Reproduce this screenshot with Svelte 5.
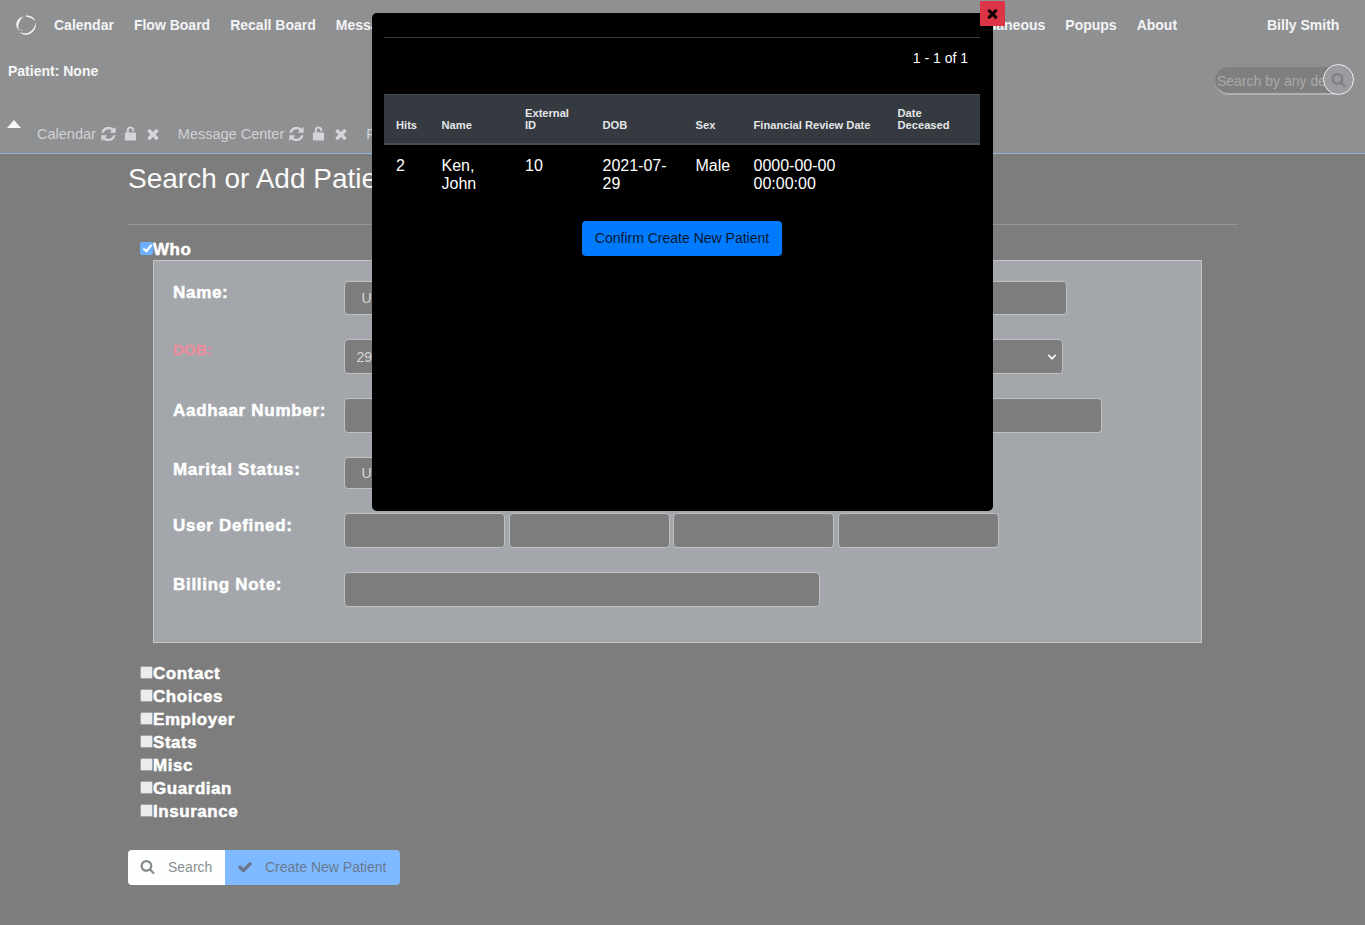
<script>
  const nav = ['Flow Board','Recall Board','Messages','Patient/Client','Fees','Modules','Procedures','Administration','Reports','Miscellaneous','Popups','About'];
  const refresh = 'M1639 1056q0 5-1 7-64 268-268 434.5t-478 166.5q-146 0-282.5-55t-243.5-157l-129 129q-19 19-45 19t-45-19-19-45v-448q0-26 19-45t45-19h448q26 0 45 19t19 45-19 45l-137 137q71 66 161 102t187 36q134 0 250-65t186-179q11-17 53-117 8-23 30-23h192q13 0 22.5 9.5t9.5 22.5zm25-800v448q0 26-19 45t-45 19h-448q-26 0-45-19t-19-45 19-45l138-138q-148-137-349-137-134 0-250 65t-186 179q-11 17-53 117-8 23-30 23h-199q-13 0-22.5-9.5t-9.5-22.5v-7q65-268 270-434.5t480-166.5q146 0 284 55.5t245 156.5l130-129q19-19 45-19t45 19 19 45z';
  const times = 'M1490 1322q0 40-28 68l-136 136q-28 28-68 28t-68-28l-294-294-294 294q-28 28-68 28t-68-28l-136-136q-28-28-28-68t28-68l294-294-294-294q-28-28-28-68t28-68l136-136q28-28 68-28t68 28l294 294 294-294q28-28 68-28t68 28l136 136q28 28 28 68t-28 68l-294 294 294 294q28 28 28 68z';
  const search = 'M1216 832q0-185-131.5-316.5t-316.5-131.5-316.5 131.5-131.5 316.5 131.5 316.5 316.5 131.5 316.5-131.5 131.5-316.5zm512 832q0 52-38 90t-90 38q-54 0-90-38l-343-342q-179 124-399 124-143 0-273.5-55.5t-225-150-150-225-55.5-273.5 55.5-273.5 150-225 225-150 273.5-55.5 273.5 55.5 225 150 150 225 55.5 273.5q0 220-124 399l343 343q37 37 37 90z';
  const check = 'M1671 566q0 40-28 68l-724 724-136 136q-28 28-68 28t-68-28l-136-136-362-362q-28-28-28-68t28-68l136-136q28-28 68-28t68 28l294 295 656-657q28-28 68-28t68 28l136 136q28 28 28 68z';
  const sections = ['Contact','Choices','Employer','Stats','Misc','Guardian','Insurance'];
  const tabs = ['Calendar','Message Center'];
</script>

<div class="page">
  <header class="header">
    <nav class="nav">
      <svg class="logo" viewBox="0 0 22 22" width="22" height="22" fill="#f6f6f6">
        <path d="M8.500 2.500C4.200 3.400 1.200 6.800 1.300 10.800c.1 2.400 1.100 4.500 2.800 5.900C3 14.900 3 12.400 3.700 10c.8-3 2.500-5.600 4.800-7.500z"/>
        <path d="M11 1.600c4.500-.2 8.300 2 9.200 5.700-1.600-2.300-5-4.300-9.200-4.800-.5-.1-.5-.9 0-.9z"/>
        <path d="M20.700 8.500c.9 5-1.800 10-6.800 11.700-3.500 1.200-7 .4-9.200-2.100 2.800 1.500 6.300 1.700 9.300.3 3.700-1.700 6-5.500 6.700-9.900z"/>
        <path d="M3.600 13.800c.4 1.300 2.500 3 4.800 3.300-1.900.1-3.900-.7-4.800-3.300z"/>
      </svg>
      <span class="item first">Calendar</span>
      {#each nav as n}<span class="item">{n}</span>{/each}
      <span class="user">Billy Smith</span>
    </nav>
    <div class="patient-row">
      <strong class="patient">Patient: None</strong>
      <div class="global-search">
        <span class="placeholder">Search by any de</span>
        <span class="circle"><svg viewBox="0 0 1792 1792" width="15" height="15"><path d={search} fill="#7f7f7f"/></svg></span>
      </div>
    </div>
    <div class="tabs">
      <span class="caret"></span>
      {#each tabs as t}
        <span class="tab">
          <span class="tab-label">{t}</span>
          <svg class="i-refresh" viewBox="100 200 1600 1400" width="15" height="14"><path d={refresh}/></svg>
          <svg class="i-lock" viewBox="0 0 14 16" width="13" height="15"><path d="M3 7V4.300C3 2 4.800.5 7 .5s4 1.500 4 3.800v.7c0 .4-.3.6-.7.6h-.8c-.4 0-.6-.2-.6-.6v-.7C8.900 3.200 8.100 2.500 7 2.500s-1.900.7-1.900 1.800V7h6.800c.6 0 1.100.5 1.100 1.100v6.300c0 .6-.5 1.100-1.100 1.100H2.100c-.6 0-1.100-.5-1.100-1.100V8.100C1 7.500 1.500 7 2.100 7z"/></svg>
          <svg class="i-times" viewBox="250 250 1300 1300" width="12" height="12"><path d={times}/></svg>
        </span>
      {/each}
      <span class="tab-label">Fees</span>
    </div>
  </header>

  <main class="main">
    <h1>Search or Add Patient</h1>
    <hr />
    <label class="section who"><input type="checkbox" checked />Who</label>
    <div class="panel">
      <div class="row">
        <span class="lbl name">Name:</span>
        <div class="field first-field w-name"><span>Unassigned</span></div>
      </div>
      <div class="row">
        <span class="lbl dob">DOB:</span>
        <div class="field dobf w-dob"><span class="small">29</span><svg viewBox="0 0 12 12" width="10" height="10" class="chev"><path d="M1.500 3.500 6 8l4.500-4.500" fill="none" stroke="#f2f2f2" stroke-width="2.200"/></svg></div>
      </div>
      <div class="row">
        <span class="lbl">Aadhaar Number:</span>
        <div class="field tall w-aad"></div>
      </div>
      <div class="row">
        <span class="lbl">Marital Status:</span>
        <div class="field short w-mar"><span>Unassigned</span></div>
      </div>
      <div class="row four">
        <span class="lbl">User Defined:</span>
        <div class="field ud"></div><div class="field ud"></div><div class="field ud"></div><div class="field ud"></div>
      </div>
      <div class="row">
        <span class="lbl">Billing Note:</span>
        <div class="field tall w-bill"></div>
      </div>
    </div>

    <div class="sections">
      {#each sections as s}
        <label class="section"><input type="checkbox" />{s}</label>
      {/each}
    </div>

    <div class="actions">
      <button class="btn search"><svg viewBox="0 0 1792 1792" width="15" height="15"><path d={search} fill="#85888b"/></svg><span>Search</span></button>
      <button class="btn create"><svg viewBox="0 0 1792 1792" width="16" height="16"><path d={check} fill="#6a7a8e"/></svg><span>Create New Patient</span></button>
    </div>
  </main>

  <div class="modal">
    <button class="close" aria-label="Close"><svg viewBox="0 0 1792 1792" width="15" height="15"><path d={times} fill="#140508"/></svg></button>
    <div class="rule"></div>
    <div class="count">1 - 1 of 1</div>
    <table>
      <colgroup>
        <col style="width:45.5px"/><col style="width:83.5px"/><col style="width:77.5px"/><col style="width:93px"/><col style="width:58px"/><col style="width:144px"/><col style="width:94.5px"/>
      </colgroup>
      <thead>
        <tr><th>Hits</th><th>Name</th><th>External<br/>ID</th><th>DOB</th><th>Sex</th><th>Financial Review Date</th><th>Date<br/>Deceased</th></tr>
      </thead>
      <tbody>
        <tr><td>2</td><td>Ken,<br/>John</td><td>10</td><td>2021-07-<br/>29</td><td>Male</td><td>0000-00-00<br/>00:00:00</td><td></td></tr>
      </tbody>
    </table>
    <div class="confirm-wrap"><button class="confirm">Confirm Create New Patient</button></div>
  </div>
</div>

<style>
  :global(body) { margin: 0; background: #7d7d7d; }
  .page { position: relative; width: 1365px; height: 925px; overflow: hidden; background: #7d7d7d; font-family: "Liberation Sans", Arial, sans-serif; color: #fff; }
  .header { height: 153px; background: #8f9092; border-bottom: 1px solid #8db6de; display: flex; flex-direction: column; }
  .nav { height: 50px; display: flex; align-items: center; padding-left: 15px; font-size: 14px; font-weight: 700; color: #f3f4f6; }
  .logo { flex: none; }
  .item { margin-left: 20px; white-space: nowrap; }
  .item.first { margin-left: 17px; }
  .user { position: absolute; left: 1267px; top: 17px; line-height: 16px; }
  .patient-row { position: relative; height: 54px; }
  .patient { position: absolute; left: 8px; top: 13px; font-size: 14px; line-height: 16px; color: #f6f6f6; }
  .global-search { position: absolute; left: 1215px; top: 17px; width: 130px; height: 28px; box-sizing: border-box; background: #7f7f7f; border-radius: 14px; border-bottom: 2px solid #b0b0b0; }
  .placeholder { position: absolute; left: 2px; top: 6px; font-size: 14px; line-height: 17px; color: #a9a9a9; white-space: nowrap; }
  .circle { position: absolute; left: 108px; top: -3px; width: 29px; height: 29px; border: 1.500px solid #eceded; border-radius: 50%; background: #9a9c9f; display: flex; align-items: center; justify-content: center; }
  .tabs { position: relative; flex: 1; display: flex; align-items: center; padding-left: 37px; padding-top: 10px; font-size: 14.500px; color: #cfd1d4; }
  .caret { position: absolute; left: 7px; top: 16px; width: 0; height: 0; border-left: 7.500px solid transparent; border-right: 7.500px solid transparent; border-bottom: 8px solid #f7f7f7; }
  .tab { display: flex; align-items: center; margin-right: 19px; }
  .tab-label { white-space: nowrap; }
  .tab svg { fill: #d3d5d8; flex: none; }
  .i-refresh { margin-left: 5px; }
  .i-lock { margin-left: 8px; }
  .i-times { margin-left: 10px; }

  .main { padding: 0 127px 0 128px; }
  h1 { margin: 8px 0 0; font-size: 28px; font-weight: 400; line-height: 34px; color: #fafafa; white-space: nowrap; }
  hr { margin: 28px 0 0; border: 0; border-top: 1px solid #959595; }
  .section { display: flex; align-items: center; margin-left: 12px; height: 23px; font-size: 17px; font-weight: 700; letter-spacing: .55px; color: #fff; -webkit-text-stroke: .5px #fff; line-height: 23px; }
  .section.who { margin-top: 13px; height: 22px; }
  .section input { margin: 0; width: 13px; height: 13px; flex: none; position: relative; top: -1px; appearance: none; background: #ececec; border: 1px solid #a3a3a3; border-radius: 2px; box-sizing: border-box; }
  .section input:checked { background: #6db0ff; border-color: #6db0ff; }
  .section input:checked::after { content: ""; position: absolute; left: 3.500px; top: .5px; width: 3px; height: 7px; border: solid #fff; border-width: 0 2px 2px 0; transform: rotate(40deg); }
  .panel { margin: 0 36px 0 25px; height: 383px; box-sizing: border-box; padding: 20px 19px 0; background: #a3a6aa; border: 1px solid #c3c6c9; display: flex; flex-direction: column; gap: 24px; }
  .row { display: flex; align-items: flex-start; gap: 4px; }
  .lbl { flex: none; width: 166.500px; margin-top: 2px; font-size: 17px; font-weight: 700; letter-spacing: .7px; -webkit-text-stroke: .5px #fff; line-height: 22px; color: #fff; }
  .lbl.name { margin-top: 1px; }
  .lbl.dob { color: #e8909f; -webkit-text-stroke: .5px #e8909f; margin-top: 0; font-size: 15px; letter-spacing: .2px; }
  .four { gap: 3.650px; }
  .four .lbl { margin-right: .85px; }
  .field { box-sizing: border-box; flex: none; background: #7d7d7d; border: 1px solid #bfc1c4; border-radius: 4px; display: flex; align-items: center; padding-left: 17px; font-size: 14px; color: #d7d9db; position: relative; }
  .first-field { height: 34px; }
  .tall { height: 35px; } .dobf { height: 35px; } .short { height: 32px; }
  .small { margin-left: -5px; }
  .w-name { width: 723px; } .w-dob { width: 719px; } .w-aad { width: 758px; } .w-mar { width: 200px; } .w-bill { width: 476px; }
  .ud { width: 161px; height: 35px; }
  .chev { position: absolute; right: 5px; top: 12px; }
  .sections { margin-top: 19px; }
  .actions { display: flex; margin-top: 27px; }
  .btn { height: 35px; border: 0; padding: 0 0 2px; box-sizing: border-box; display: flex; align-items: center; font: 14px "Liberation Sans", Arial, sans-serif; }
  .search { width: 97px; background: #fdfefe; color: #8b8e91; border-radius: 4px 0 0 4px; padding-left: 12px; }
  .search span { margin-left: 13px; }
  .create { width: 175px; background: #7fb9ff; color: #68798f; border-radius: 0 4px 4px 0; padding-left: 12px; }
  .create span { margin-left: 12px; }

  .modal { position: absolute; left: 372px; top: 13px; width: 621px; height: 498px; box-sizing: border-box; background: #000; border-radius: 5px; padding: 24px 13px 0 12px; }
  .close { position: absolute; left: 608px; top: -12px; width: 25px; height: 25px; border: 0; padding: 0; background: #dc3545; display: flex; align-items: center; justify-content: center; }
  .rule { height: 1px; background: #3b3b42; }
  .count { margin-top: 12px; height: 16px; padding-right: 12px; text-align: right; font-size: 14px; line-height: 16px; color: #fff; }
  table { margin-top: 28px; width: 596px; table-layout: fixed; border-collapse: collapse; }
  thead th { padding: 12px 4px 12px 12px; background: #343a40; border-top: 1px solid #454d55; border-bottom: 2px solid #454d55; text-align: left; vertical-align: bottom; font-size: 11.150px; line-height: 12px; font-weight: 700; color: #e5e6e8; }
  tbody td { padding: 12px 4px 12px 12px; vertical-align: top; font-size: 16px; line-height: 18px; color: #fff; }
  .confirm-wrap { display: flex; justify-content: center; margin-top: 16px; }
  .confirm { width: 200px; height: 35px; border: 0; border-radius: 4px; background: #007bff; color: #02162f; font: 14px "Liberation Sans", Arial, sans-serif; padding: 0 0 2px; box-sizing: border-box; }
</style>
